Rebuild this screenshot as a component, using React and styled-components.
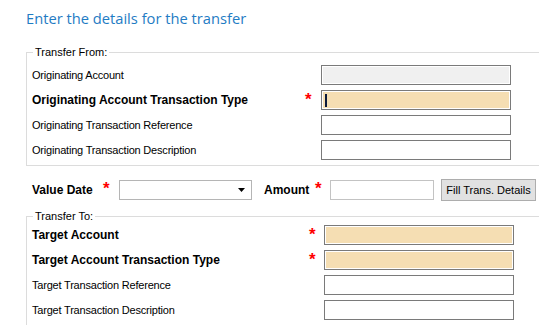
import React from "react";
import styled, { createGlobalStyle } from "styled-components";

const GlobalStyle = createGlobalStyle`
  html, body {
    margin: 0;
    padding: 0;
    background: #ffffff;
    overflow: hidden;
  }
  body {
    font-family: "Liberation Sans", Arial, sans-serif;
    font-size: 11px;
    color: #000;
  }
`;

const Page = styled.div`
  width: 539px;
  height: 325px;
  padding: 0 0 0 26px;
  box-sizing: border-box;
  overflow: hidden;
`;

const Title = styled.h1`
  margin: 0;
  padding-top: 8px;
  height: 46px;
  box-sizing: border-box;
  font-family: "Open Sans", "Noto Sans", sans-serif;
  font-weight: 400;
  font-size: 14.7px;
  color: #1f7cc4;
`;

const Group = styled.fieldset`
  margin: 0;
  width: 513px;
  box-sizing: border-box;
  border: 1px solid #dcdcdc;
  border-right: 0;
  padding: ${(p) => p.$pad};
`;

const Legend = styled.legend`
  padding: 0 2px;
  margin-left: 1px;
  font-size: 11px;
  line-height: 13px;
`;

const Rows = styled.div`
  display: grid;
  grid-template-columns: ${(p) => p.$cols};
  grid-auto-rows: 20px;
  row-gap: 5px;
  align-items: center;
`;

const Label = styled.span`
  font-size: ${(p) => (p.$bold ? "12px" : "11px")};
  font-weight: ${(p) => (p.$bold ? 700 : 400)};
  letter-spacing: ${(p) => (p.$bold ? "0" : "-0.2px")};
  white-space: nowrap;
  line-height: 20px;
`;

const Star = styled.span`
  align-self: start;
  color: #f00;
  font-weight: 700;
  font-size: 17px;
  line-height: 17px;
  height: 20px;
  margin-top: 1px;
`;

const Field = styled.div`
  display: flex;
  align-items: center;
  height: 20px;
  box-sizing: border-box;
  border: 1px solid ${(p) => (p.$light ? "#c3c3c3" : "#7a7a7a")};
  background: ${(p) => p.$bg || "#fff"};
  box-shadow: inset 0 0 0 1px #fff;
  padding: 0 2px;
  width: ${(p) => p.$w || "190px"};
`;

const Caret = styled.span`
  width: 2px;
  height: 13px;
  background: #0b1a3b;
  margin-left: 1px;
`;

const Input = styled.input`
  flex: 1;
  min-width: 0;
  border: 0;
  outline: 0;
  background: transparent;
  padding: 0;
  font: inherit;
`;

const Middle = styled.div`
  display: flex;
  align-items: center;
  height: 22px;
  margin: 13px 0 9px;
  padding-left: 6px;
`;

const Combo = styled.div`
  display: flex;
  align-items: center;
  justify-content: flex-end;
  width: 133px;
  height: 20px;
  box-sizing: border-box;
  border: 1px solid #b5b5b5;
  padding-right: 6px;
  margin-right: 12px;
`;

const Button = styled.button`
  margin-left: 7px;
  width: 95px;
  height: 22px;
  box-sizing: border-box;
  border: 1px solid #adadad;
  background: #e1e1e1;
  font-family: "Liberation Sans", Arial, sans-serif;
  font-size: 11px;
  color: #000;
  padding: 0;
`;

const MidLabel = styled(Label)`
  width: ${(p) => p.$w};
`;

const MidStar = styled(Star)`
  width: ${(p) => p.$w};
  align-self: auto;
  height: 17px;
  margin-top: -4px;
`;

const FromRows = [
  { label: "Originating Account", bg: "#f0f0f0" },
  { label: "Originating Account Transaction Type", bold: true, req: true, bg: "#f5deb3", caret: true },
  { label: "Originating Transaction Reference" },
  { label: "Originating Transaction Description" },
];

const ToRows = [
  { label: "Target Account", bold: true, req: true, bg: "#f5deb3" },
  { label: "Target Account Transaction Type", bold: true, req: true, bg: "#f5deb3" },
  { label: "Target Transaction Reference" },
  { label: "Target Transaction Description" },
];

const FieldRows = ({ rows, cols }) => (
  <Rows $cols={cols}>
    {rows.map((r) => (
      <React.Fragment key={r.label}>
        <Label $bold={r.bold}>{r.label}</Label>
        <Star>{r.req ? "*" : ""}</Star>
        <Field $bg={r.bg}>
          {r.caret && <Caret />}
          <Input readOnly />
        </Field>
      </React.Fragment>
    ))}
  </Rows>
);

export default function App() {
  return (
    <Page>
      <GlobalStyle />
      <Title>Enter the details for the transfer</Title>
      <Group $pad="6px 0 5px 5px">
        <Legend>Transfer From:</Legend>
        <FieldRows rows={FromRows} cols="273px 16px 190px" />
      </Group>
      <Middle>
        <MidLabel $bold $w="71px">Value Date</MidLabel>
        <MidStar $w="16px">*</MidStar>
        <Combo>
          <svg width="7" height="4" viewBox="0 0 7 4">
            <path d="M0 0h7L3.5 4z" fill="#000" />
          </svg>
        </Combo>
        <MidLabel $bold $w="51px">Amount</MidLabel>
        <MidStar $w="15px">*</MidStar>
        <Field $light $w="104px">
          <Input readOnly />
        </Field>
        <Button>Fill Trans. Details</Button>
      </Middle>
      <Group $pad="2px 0 5px 5px">
        <Legend>Transfer To:</Legend>
        <FieldRows rows={ToRows} cols="277px 15px 190px" />
      </Group>
    </Page>
  );
}
